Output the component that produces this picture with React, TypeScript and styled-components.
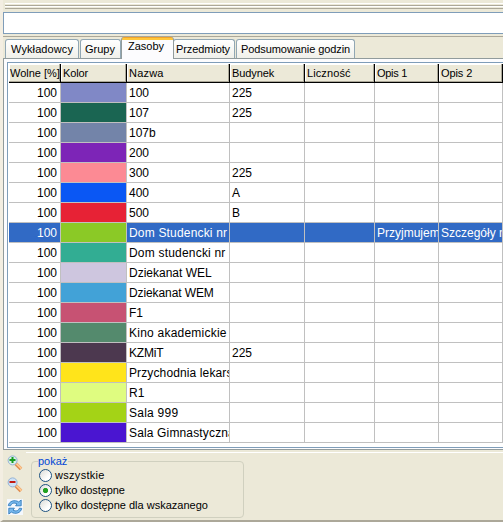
import React, { useState } from "react";
import styled, { createGlobalStyle, css } from "styled-components";

const Global = createGlobalStyle`
  * { box-sizing: border-box; }
  body { margin: 0; background: #ece9d8; overflow: hidden; }
`;

const Window = styled.div`
  width: 503px;
  height: 522px;
  display: flex;
  flex-direction: column;
  overflow: hidden;
  background: #ece9d8;
  border-left: 3px solid #f3eee2;
  border-bottom: 2px solid #aca899;
  font: 11px/13px "Liberation Sans", Arial, sans-serif;
  color: #000;
  white-space: nowrap;
`;

const Splitter = styled.div`
  height: 7px;
  margin: 3px 0 0 2px;
  flex: none;
  background: linear-gradient(#fff 0 1px, #ece9d8 1px 2px, #aca899 2px 3px, #fff 3px 4px, #ece9d8 4px 5px, #aca899 5px 6px, #ece9d8 6px);
`;

const SearchInput = styled.input`
  display: block;
  flex: none;
  width: 510px;
  height: 22px;
  margin: 2px 0 0;
  padding: 0 4px;
  border: 1px solid #7f9db9;
  background: #fff;
  outline: 0;
`;

const Tabs = styled.div`
  display: flex;
  flex: none;
  height: 23px;
  margin-top: 2px;
  padding-left: 2px;
  align-items: flex-end;
  border-top: 1px solid #aca899;
  border-bottom: 1px solid #919b9c;
`;

const Tab = styled.button<{ $w: number; $active?: boolean; $pad?: number; $spacing?: number }>`
  flex: none;
  width: ${(p) => p.$w}px;
  height: 19px;
  margin: 0 1px 0 0;
  padding: 1px 0 0 ${(p) => p.$pad ?? 5}px;
  text-align: left;
  border: 1px solid #91a7b4;
  border-bottom: 0;
  border-radius: 3px 3px 0 0;
  background: linear-gradient(#fff, #f0f0ea);
  font: inherit;
  letter-spacing: ${(p) => p.$spacing ?? 0}px;
  color: inherit;
  ${(p) => p.$active && css`
    height: 22px;
    margin: 0 -1px -1px -1px;
    padding-top: 0;
    padding-bottom: 3px;
    border-color: #919b9c;
    border-top: 0;
    background: linear-gradient(#f0a32c 0 1px, #ffc73c 1px 3px, #fcfcfe 3px);
    position: relative;
  `}
`;

const Page = styled.div`
  flex: none;
  height: 391px;
  padding: 3px 0 1px 3px;
  border-left: 1px solid #919b9c;
  border-bottom: 1px solid #919b9c;
  background: #fcfcfe;
`;

const GridFrame = styled.div`
  height: 386px;
  padding: 1px 0 0 1px;
  border: 1px solid #7f9db9;
  border-right: 0;
  background: #fff;
`;

const columns = "52px 66px 103px 75px 70px 64px 64px";

const HeaderRow = styled.div`
  display: grid;
  grid-template-columns: ${columns};
  height: 19px;
`;

const HeaderCell = styled.div<{ $spacing?: number }>`
  padding: 3px 0 0 2px;
  overflow: hidden;
  border-right: 1px solid #000;
  border-bottom: 1px solid #000;
  background: #ece9d8;
  box-shadow: inset -1px -1px #aca899, inset 1px 1px #fff;
  letter-spacing: ${(p) => p.$spacing ?? 0}px;
  &:first-child { padding-left: 1px; }
`;

const Row = styled.div<{ $selected: boolean }>`
  display: grid;
  grid-template-columns: ${columns};
  height: 20px;
  font-size: 12px;
  background: ${(p) => (p.$selected ? "#316ac5" : "#fff")};
  color: ${(p) => (p.$selected ? "#fff" : "#000")};
`;

const Cell = styled.div<{ $fill?: string; $right?: boolean; $spacing?: number }>`
  padding: 4px ${(p) => (p.$right ? 3 : 0)}px 0 2px;
  overflow: hidden;
  border-right: 1px solid #c0c0c0;
  border-bottom: 1px solid #c0c0c0;
  text-align: ${(p) => (p.$right ? "right" : "left")};
  background: ${(p) => p.$fill ?? "transparent"};
  letter-spacing: ${(p) => p.$spacing ?? 0}px;
`;

const Footer = styled.div`
  display: flex;
  flex: 1;
  padding-left: 4px;
`;

const Tools = styled.div`
  display: flex;
  flex-direction: column;
  width: 19px;
  padding-top: 5px;
  gap: 6px;
`;

const ToolButton = styled.button`
  width: 16px;
  height: 16px;
  padding: 0;
  border: 0;
  background: none;
  svg { display: block; }
`;

const Options = styled.div`
  flex: 1;
  margin-top: 2px;
  padding-left: 5px;
  border-top: 1px solid #fff;
`;

const Group = styled.fieldset`
  width: 213px;
  height: 63px;
  margin: 2px 0 0;
  padding: 0 0 0 7px;
  border: 1px solid #d0d0bf;
  border-radius: 4px;
`;

const Legend = styled.legend`
  height: 13px;
  margin-left: -1px;
  padding: 0 1px 0 0;
  color: #0046d5;
`;

const Choice = styled.label<{ $spacing: number }>`
  display: flex;
  align-items: center;
  height: 15px;
  gap: 3px;
  letter-spacing: ${(p) => p.$spacing}px;
`;

const Radio = styled.input`
  appearance: none;
  width: 13px;
  height: 13px;
  margin: 0;
  border: 1px solid #1d5281;
  border-radius: 50%;
  background: linear-gradient(135deg, #dcdcd7, #fff 70%);
  &:checked {
    background: radial-gradient(circle, #21a121 0 2.2px, transparent 3px), linear-gradient(135deg, #dcdcd7, #fff 70%);
  }
`;

const Magnifier = ({ minus = false }: { minus?: boolean }) => (
  <svg width="16" height="16" viewBox="0 0 16 16">
    <path d="M8.8 8.8 14 14" stroke="#e08a4c" strokeWidth="3.6" />
    <path d="M9.4 8.6 14.4 13.6" stroke="#ffcb92" strokeWidth="1.8" />
    <circle cx="5.6" cy="5.4" r="4.5" fill={minus ? "#cfe2f7" : "#d9efe9"} stroke="#94b3d4" />
    {minus ? (
      <path d="M2.5 5H8.5" stroke="#c41b12" strokeWidth="2" />
    ) : (
      <path d="M2.5 5H8.5M5.5 2V8" stroke="#179b20" strokeWidth="2" />
    )}
  </svg>
);

const RefreshIcon = () => (
  <svg width="16" height="16" viewBox="0 0 16 16">
    <path d="M0 0H16V16H0Z" fill="#f4f8fd" />
    <g fill="#78b8ec" stroke="#2673b8" strokeWidth="0.8" strokeLinejoin="round">
      <path d="M1.3 6.6C2 2.2 7.5.2 11.7 2.9L14.2 1V6.8H8.6L10 4.9C7.3 3.4 4.6 4 3.6 6.8Z" />
      <path d="M14.7 9.4C14 13.8 8.5 15.8 4.3 13.1L1.8 15V9.2H7.4L6 11.1C8.7 12.6 11.4 12 12.4 9.2Z" />
    </g>
  </svg>
);

type Resource = { name: string; color: string; building?: string; note1?: string; note2?: string; spacing?: number };

const resources: Resource[] = [
  { name: "100", color: "#8088c6", building: "225" },
  { name: "107", color: "#1a6552", building: "225" },
  { name: "107b", color: "#7384a9" },
  { name: "200", color: "#7d25b7" },
  { name: "300", color: "#fc8a94", building: "225" },
  { name: "400", color: "#0a57f4", building: "A" },
  { name: "500", color: "#e72235", building: "B" },
  { name: "Dom Studencki nr", color: "#8bc926", note1: "Przyjmujemy", note2: "Szczegóły na", spacing: 0.18 },
  { name: "Dom studencki nr", color: "#32ad93", spacing: 0.2 },
  { name: "Dziekanat WEL", color: "#cec6df" },
  { name: "Dziekanat WEM", color: "#42a2d7", spacing: -0.1 },
  { name: "F1", color: "#c75273" },
  { name: "Kino akademickie", color: "#548a6d", spacing: 0.23 },
  { name: "KZMiT", color: "#4c384f", building: "225", spacing: -0.2 },
  { name: "Przychodnia lekars", color: "#ffe41b", spacing: 0.12 },
  { name: "R1", color: "#dffc80" },
  { name: "Sala 999", color: "#a4d316", spacing: 0.25 },
  { name: "Sala Gimnastyczna", color: "#4a15d1", spacing: 0.15 },
];

const headings = [
  { text: "Wolne [%]", spacing: 0 },
  { text: "Kolor", spacing: -0.1 },
  { text: "Nazwa", spacing: 0.2 },
  { text: "Budynek", spacing: -0.1 },
  { text: "Liczność", spacing: 0.1 },
  { text: "Opis 1", spacing: -0.3 },
  { text: "Opis 2", spacing: -0.1 },
];

const choices = [
  { text: "wszystkie", spacing: 0.3 },
  { text: "tylko dostępne", spacing: -0.08 },
  { text: "tylko dostępne dla wskazanego", spacing: 0 },
];

export default function App() {
  const [choice, setChoice] = useState(1);
  const [selected, setSelected] = useState(7);
  return (
    <>
      <Global />
      <Window>
        <Splitter />
        <SearchInput />
        <Tabs>
          <Tab $w={74} $spacing={0.1}>Wykładowcy</Tab>
          <Tab $w={41} $pad={4}>Grupy</Tab>
          <Tab $w={53} $pad={6} $active>Zasoby</Tab>
          <Tab $w={62} $pad={2} $spacing={-0.1}>Przedmioty</Tab>
          <Tab $w={119} $pad={4} $spacing={-0.08}>Podsumowanie godzin</Tab>
        </Tabs>
        <Page>
          <GridFrame>
            <HeaderRow>
              {headings.map((h) => <HeaderCell key={h.text} $spacing={h.spacing}>{h.text}</HeaderCell>)}
            </HeaderRow>
            {resources.map((r, i) => (
              <Row key={i} $selected={i === selected} onClick={() => setSelected(i)}>
                <Cell $right>100</Cell>
                <Cell $fill={r.color} />
                <Cell $spacing={r.spacing}>{r.name}</Cell>
                <Cell>{r.building}</Cell>
                <Cell />
                <Cell>{r.note1}</Cell>
                <Cell>{r.note2}</Cell>
              </Row>
            ))}
          </GridFrame>
        </Page>
        <Footer>
          <Tools>
            <ToolButton><Magnifier /></ToolButton>
            <ToolButton><Magnifier minus /></ToolButton>
            <ToolButton><RefreshIcon /></ToolButton>
          </Tools>
          <Options>
            <Group>
              <Legend>pokaż</Legend>
              {choices.map((c, i) => (
                <Choice key={c.text} $spacing={c.spacing}>
                  <Radio type="radio" name="show" checked={choice === i} onChange={() => setChoice(i)} />
                  {c.text}
                </Choice>
              ))}
            </Group>
          </Options>
        </Footer>
      </Window>
    </>
  );
}
